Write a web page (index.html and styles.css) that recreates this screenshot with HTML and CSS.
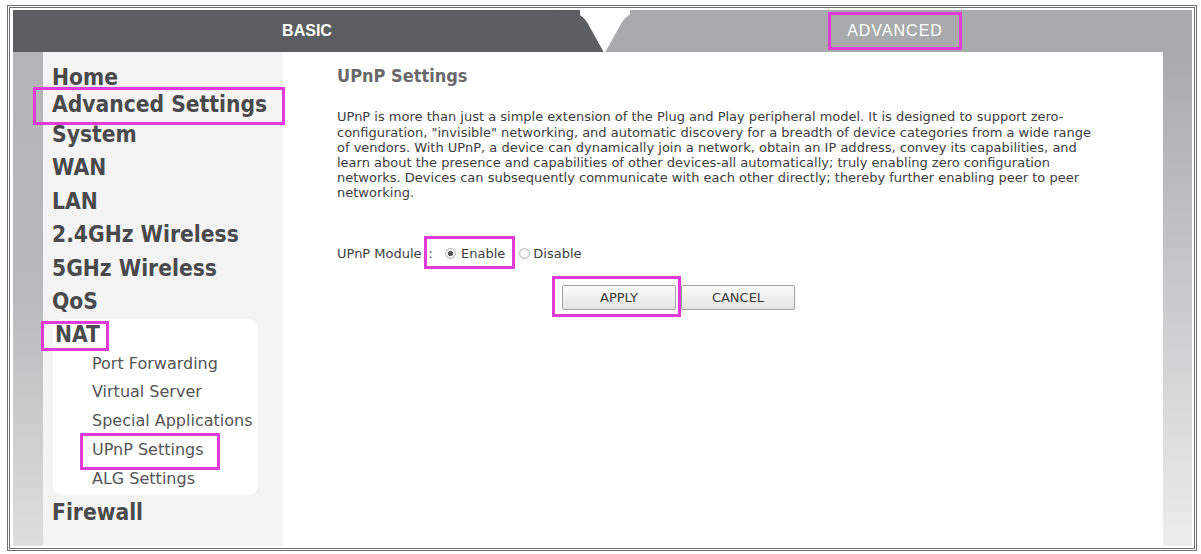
FILE: index.html
```html
<!DOCTYPE html>
<html>
<head>
<meta charset="utf-8">
<link rel="stylesheet" href="styles.css">
</head>
<body>
<div class="frame">
  <div class="tabs">
    <div class="tab tab-basic">BASIC</div>
    <div class="tab tab-adv hl">ADVANCED</div>
  </div>
  <div class="body">
    <div class="strip-left"></div>
    <nav class="sidebar">
      <ul class="nav">
        <li class="nav-item short">Home</li>
        <li class="nav-item short hl hl-advset">Advanced Settings</li>
        <li class="nav-item">System</li>
        <li class="nav-item">WAN</li>
        <li class="nav-item">LAN</li>
        <li class="nav-item">2.4GHz Wireless</li>
        <li class="nav-item">5GHz Wireless</li>
        <li class="nav-item">QoS</li>
        <li class="nat-box hl hl-nat">
          <div class="nav-item nat-title">NAT</div>
          <ul class="subnav">
            <li class="sub">Port Forwarding</li>
            <li class="sub">Virtual Server</li>
            <li class="sub">Special Applications</li>
            <li class="sub hl hl-upnp">UPnP Settings</li>
            <li class="sub">ALG Settings</li>
          </ul>
        </li>
        <li class="nav-item firewall">Firewall</li>
      </ul>
    </nav>
    <main class="content">
      <h1 class="title">UPnP Settings</h1>
      <p class="desc">UPnP is more than just a simple extension of the Plug and Play peripheral model. It is designed to support zero-<br>configuration, "invisible" networking, and automatic discovery for a breadth of device categories from a wide range<br>of vendors. With UPnP, a device can dynamically join a network, obtain an IP address, convey its capabilities, and<br>learn about the presence and capabilities of other devices-all automatically; truly enabling zero configuration<br>networks. Devices can subsequently communicate with each other directly; thereby further enabling peer to peer<br>networking.</p>
      <div class="module-row hl">
        <span class="module-label">UPnP Module</span>
        <span class="colon">:</span>
        <input type="radio" name="upnp" class="radio radio-enable" checked>
        <span class="opt">Enable</span>
        <input type="radio" name="upnp" class="radio radio-disable">
        <span class="opt opt-disable">Disable</span>
      </div>
      <div class="btn-row hl">
        <button class="btn">APPLY</button>
        <button class="btn">CANCEL</button>
      </div>
    </main>
    <div class="strip-right"></div>
  </div>
</div>
</body>
</html>
```

FILE: styles.css
```css
html, body {
  margin: 0;
  background: #ffffff;
}

body {
  font-family: "DejaVu Sans", sans-serif;
}

.frame {
  margin: 5px 0 0 7px;
  width: 1190px;
  height: 546px;
  box-sizing: border-box;
  border: 3px double #6e6e6e;
  padding: 2px 2px 2px 3px;
  display: flex;
  flex-direction: column;
}

/* ---------- tabs ---------- */
.tabs {
  display: flex;
  gap: 50px;
  height: 42px;
  flex: none;
}

.tab {
  position: relative;
  display: flex;
  align-items: center;
  justify-content: center;
  box-sizing: border-box;
  color: #ffffff;
  font-family: "Liberation Sans", Arial, sans-serif;
  font-size: 16px;
}

.tab-basic {
  flex: 0 0 567px;
  background: #5c5f62;
  font-weight: bold;
  padding-left: 21px;
}

.tab-basic::after {
  content: "";
  position: absolute;
  top: 0;
  bottom: 0;
  right: -12px;
  width: 26px;
  background: #5c5f62;
  transform: skewX(29deg);
  border-top-right-radius: 14px;
}

.tab-adv {
  flex: 1;
  background: #a9aaab;
  letter-spacing: 1px;
  padding-right: 32px;
}

.tab-adv::before {
  content: "";
  position: absolute;
  top: 0;
  bottom: 0;
  left: -13px;
  width: 26px;
  background: #a9aaab;
  transform: skewX(-29deg);
  border-top-left-radius: 14px;
}

/* ---------- body ---------- */
.body {
  flex: 1;
  display: flex;
  min-height: 0;
}

.strip-left {
  width: 30px;
  flex: none;
  background: linear-gradient(#b3b4b5, #b9babb 50%, #dedede);
}

.strip-right {
  width: 29px;
  flex: none;
  background: linear-gradient(#a9aaab, #c6c7c8 45%, #ececec);
}

.sidebar {
  width: 240px;
  flex: none;
  box-sizing: border-box;
  background: #f4f4f4;
  padding: 11.5px 0 0 9px;
}

.nav, .subnav {
  list-style: none;
  margin: 0;
  padding: 0;
}

.nav-item {
  font-family: "DejaVu Sans Condensed", "DejaVu Sans", sans-serif;
  font-stretch: condensed;
  font-size: 22.6px;
  font-weight: bold;
  color: #4a4a4c;
  line-height: 33.5px;
  white-space: nowrap;
}

.nav-item.short {
  line-height: 27px;
}

.nat-box {
  width: 205px;
  margin-left: 1px;
  background: #ffffff;
  border-radius: 10px;
  padding-bottom: 2px;
}

.nat-title {
  line-height: 31px;
  padding-left: 2px;
}

.sub {
  font-size: 16px;
  color: #545456;
  line-height: 28.8px;
  padding-left: 39px;
  white-space: nowrap;
}

.firewall {
  margin-top: 1px;
}

/* ---------- content ---------- */
.content {
  flex: 1;
  background: #ffffff;
  padding-left: 54px;
}

.title {
  margin: 0;
  padding-top: 12px;
  font-family: "DejaVu Sans Condensed", "DejaVu Sans", sans-serif;
  font-stretch: condensed;
  font-size: 18px;
  font-weight: bold;
  line-height: 24px;
  color: #69696b;
}

.desc {
  margin: 21.4px 0 0;
  font-size: 13px;
  line-height: 15.2px;
  color: #3d3d3f;
  white-space: nowrap;
}

.module-row {
  margin-top: 42.4px;
  display: flex;
  align-items: center;
  height: 20px;
  font-size: 13px;
  color: #3d3d3f;
}

.colon {
  margin-left: 7px;
}

.radio {
  appearance: none;
  -webkit-appearance: none;
  margin: 0;
  width: 11px;
  height: 11px;
  box-sizing: border-box;
  border: 1px solid #b8b8b8;
  border-radius: 50%;
  background: radial-gradient(circle, #ffffff 0 30%, #e3e3e3 100%);
}

.radio:checked {
  background: radial-gradient(circle, #5a5a5a 0 2.3px, #f2f2f2 2.9px, #dcdcdc 100%);
}

.radio-enable {
  margin-left: 12px;
}

.opt {
  margin-left: 5px;
}

.radio-disable {
  margin-left: 14px;
}

.opt-disable {
  margin-left: 3px;
}

.btn-row {
  margin-top: 22px;
  padding-left: 225px;
  display: flex;
  gap: 5px;
}

.btn {
  width: 114px;
  height: 25px;
  margin: 0;
  padding: 0;
  border: 1px solid #a3a3a3;
  border-radius: 2px;
  background: linear-gradient(#fbfbfb, #e4e4e4);
  font-family: "DejaVu Sans", sans-serif;
  font-size: 13px;
  color: #3a3a3a;
}

/* ---------- magenta annotation boxes ---------- */
.hl {
  position: relative;
}

.hl::after {
  content: "";
  position: absolute;
  box-sizing: border-box;
  border: 3px solid #e23cd8;
  pointer-events: none;
}

.tab-adv.hl::after {
  left: 198px;
  top: 2px;
  width: 134px;
  height: 38px;
}

.hl-advset::after {
  left: -19px;
  top: -3.5px;
  width: 252px;
  height: 38px;
}

.hl-nat::after {
  left: -12px;
  top: 2.5px;
  width: 68px;
  height: 30px;
}

.hl-upnp::after {
  left: 27px;
  top: -3px;
  width: 140px;
  height: 37px;
}

.module-row.hl::after {
  left: 87px;
  top: -7px;
  width: 91px;
  height: 33px;
}

.btn-row.hl::after {
  left: 215px;
  top: -9px;
  width: 129px;
  height: 41px;
}
```
